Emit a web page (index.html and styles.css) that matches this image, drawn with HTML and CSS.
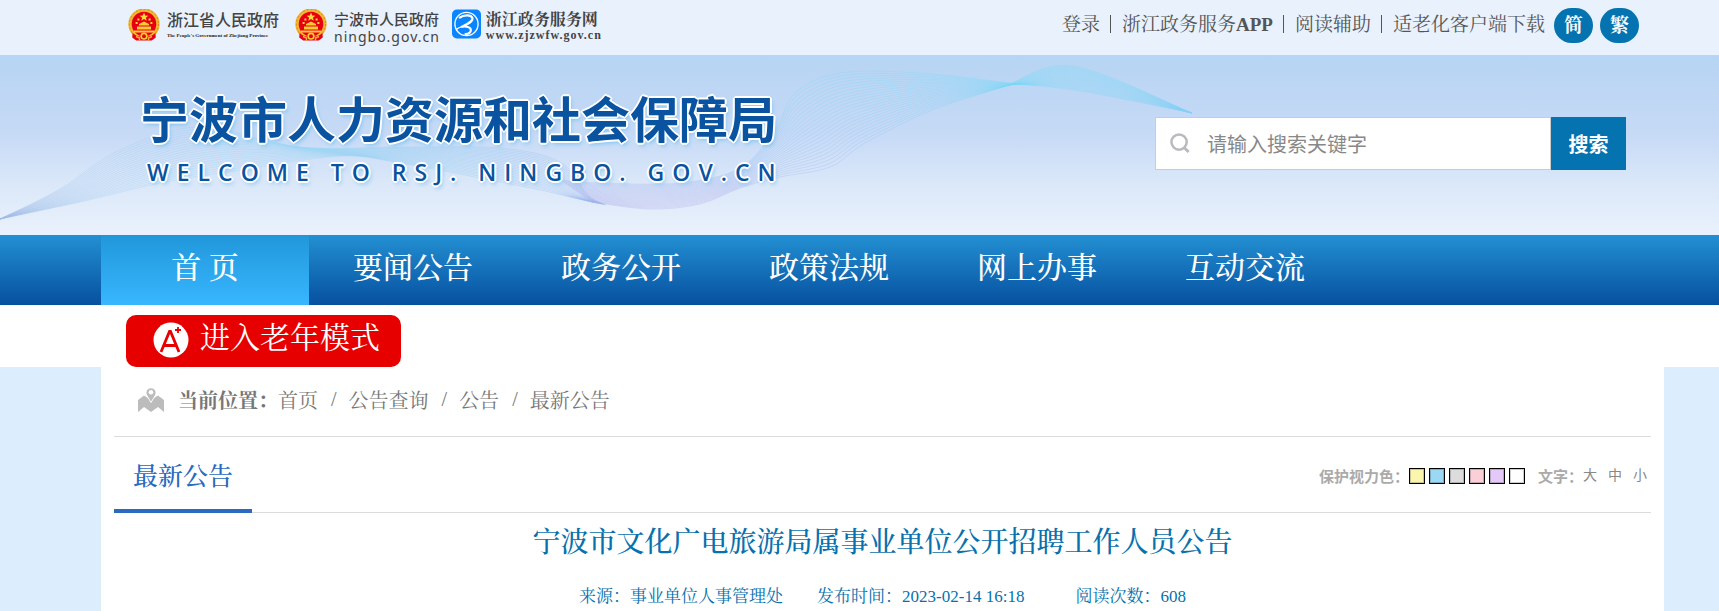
FILE: index.html
```html
<!DOCTYPE html>
<html lang="zh-CN">
<head>
<meta charset="utf-8">
<title>宁波市人力资源和社会保障局</title>
<link rel="stylesheet" href="styles.css">
</head>
<body>
<svg class="defs" width="0" height="0" aria-hidden="true">
  <symbol id="emblem" viewBox="0 0 32 32">
    <circle cx="16" cy="15" r="14" fill="#e60012" stroke="#f2b632" stroke-width="3.4"/>
    <circle cx="16" cy="15" r="14.6" fill="none" stroke="#d98a1c" stroke-width="1" stroke-dasharray="2 2"/>
    <path d="M16 3.6l1.2 2.9 3.1.2-2.4 2 .8 3-2.7-1.7-2.7 1.7.8-3-2.4-2 3.1-.2z" fill="#ffd83a"/>
    <path d="M9.4 9.4h2v2h-2zM20.6 9.4h2v2h-2zM7.6 13h2v2h-2zM22.4 13h2v2h-2z" fill="#ffd83a"/>
    <path d="M11 15l5-2.4 5 2.4v1.6H11zM9 17.6h14v3H9zM6 21.6h20v1.8H6z" fill="#ffc938"/>
    <path d="M4.6 24c4 3.6 6.400 3.400 8.400 3.400h6c2 0 4.400.2 8.400-3.400l.4 4.600-4 3H8.200l-4-3z" fill="#e60012"/>
    <path d="M8 27.500l3.500 1.500v2.500M24 27.500L20.500 29v2.500" fill="none" stroke="#f2b632" stroke-width="1.4"/>
    <circle cx="16" cy="27.200" r="2.800" fill="#e60012" stroke="#ffc938" stroke-width="1.600"/>
  </symbol>
</svg>

<header>
  <div class="topbar">
    <nav class="sites" aria-label="政府网站">
      <a class="site" href="#">
        <svg class="emblem"><use href="#emblem"/></svg>
        <span class="site-text"><span class="site-name wide">浙江省人民政府</span><span class="site-tiny">The People's Government of Zhejiang Province</span></span>
      </a>
      <a class="site" href="#">
        <svg class="emblem"><use href="#emblem"/></svg>
        <span class="site-text"><span class="site-name">宁波市人民政府</span><span class="site-url">ningbo.gov.cn</span></span>
      </a>
      <a class="site" href="#">
        <svg class="service" viewBox="0 0 30 30">
          <rect width="30" height="30" rx="5" fill="#0a84ff"/>
          <circle cx="15" cy="15" r="12" fill="none" stroke="#fff" stroke-width="1.400"/>
          <path d="M8 8.500C12 5.500 19.500 5 21 8.500c1.500 4-5 6.500-11.500 9.500 5-1 10 0 10 3.200 0 2.400-2.500 4-5.500 4.300" fill="none" stroke="#fff" stroke-width="2.200" stroke-linecap="round"/>
          <path d="M4.500 20.500c2-1.500 3.500-2 5-2.500" fill="none" stroke="#fff" stroke-width="1.500"/>
        </svg>
        <span class="site-text"><span class="site-name wide serif">浙江政务服务网</span><span class="site-www">www.zjzwfw.gov.cn</span></span>
      </a>
    </nav>
    <nav class="tools" aria-label="工具">
      <a href="#">登录</a><a href="#">浙江政务服务<b>APP</b></a><a href="#">阅读辅助</a><a href="#">适老化客户端下载</a>
      <button class="lang" type="button">简</button>
      <button class="lang" type="button">繁</button>
    </nav>
  </div>

  <div class="banner">
    <svg class="waves" id="waves" viewBox="0 0 1719 180" preserveAspectRatio="xMidYMid slice" aria-hidden="true">
      <defs>
        <linearGradient id="g1" gradientUnits="userSpaceOnUse" x1="0" y1="0" x2="700" y2="0">
          <stop offset="0" stop-color="#9fb8e6"/><stop offset=".35" stop-color="#8fd6f3"/><stop offset=".65" stop-color="#86c8f0"/><stop offset="1" stop-color="#a8a6e8"/>
        </linearGradient>
        <linearGradient id="g2" gradientUnits="userSpaceOnUse" x1="0" y1="20" x2="0" y2="150">
          <stop offset="0" stop-color="#76dbf8"/><stop offset=".5" stop-color="#8bc2f2"/><stop offset="1" stop-color="#aaa4e6"/>
        </linearGradient>
      </defs>
    </svg>
    <div class="brand">
      <h1>宁波市人力资源和社会保障局</h1>
      <p>WELCOME TO RSJ. NINGBO. GOV.CN</p>
    </div>
    <form class="search">
      <label class="field">
        <svg viewBox="0 0 22 22" aria-label="搜索"><circle cx="9.500" cy="9.500" r="8" fill="none" stroke="#b9b9be" stroke-width="2.600"/><path d="M15 15.500l4.500 4.500" stroke="#b9b9be" stroke-width="3"/></svg>
        <input type="text" placeholder="请输入搜索关键字">
      </label>
      <button type="button">搜索</button>
    </form>
  </div>

  <nav class="mainnav" aria-label="主导航">
    <a class="active" href="#">首 页</a><a href="#">要闻公告</a><a href="#">政务公开</a><a href="#">政策法规</a><a href="#">网上办事</a><a href="#">互动交流</a>
  </nav>
  <div class="elder-row">
    <button class="elder" type="button">
      <svg viewBox="0 0 36 36"><circle cx="18" cy="18" r="17.500" fill="#fff"/><path d="M8 30L16.500 9.500h1L26 30M11 23.500h12" fill="none" stroke="#e60000" stroke-width="2.800"/><path d="M25 5v6M22 8h6" stroke="#e60000" stroke-width="1.800"/></svg>
      <span>进入老年模式</span>
    </button>
  </div>
</header>

<main>
  <nav class="crumbs" aria-label="当前位置">
    <svg viewBox="0 0 26 26"><path d="M0 13l6-4.500 7 4.500 7-4.500 6 4.500v12l-6-5-7 5-7-5-6 5z" fill="#bcbcbc"/><path d="M13 15.500L8.500 8a5 5 0 1 1 9 0z" fill="#bcbcbc" stroke="#fff" stroke-width="1"/><circle cx="13" cy="5.200" r="2.300" fill="#fff"/></svg>
    <b>当前位置：</b>
    <a href="#">首页</a><i>/</i><a href="#">公告查询</a><i>/</i><a href="#">公告</a><i>/</i><a href="#">最新公告</a>
  </nav>
  <div class="tabs">
    <h2>最新公告</h2>
    <div class="reading">
      <span class="label">保护视力色：</span>
      <span class="swatches">
        <button class="c1" type="button" aria-label="黄"></button><button class="c2" type="button" aria-label="蓝"></button><button class="c3" type="button" aria-label="灰"></button><button class="c4" type="button" aria-label="粉"></button><button class="c5" type="button" aria-label="紫"></button><button class="c6" type="button" aria-label="白"></button>
      </span>
      <span class="label">文字：</span>
      <span class="sizes"><a href="#">大</a><a href="#">中</a><a href="#">小</a></span>
    </div>
  </div>
  <article>
    <h3>宁波市文化广电旅游局属事业单位公开招聘工作人员公告</h3>
    <p class="meta"><span>来源：事业单位人事管理处</span><span class="date">发布时间：2023-02-14 16:18</span><span>阅读次数：608</span></p>
  </article>
</main>
<script src="waves.js"></script>
</body>
</html>
```

FILE: styles.css
```css
* { box-sizing: border-box; }
body {
  margin: 0;
  background: #dceefd;
  font-family: "Liberation Serif", "Noto Serif CJK SC", "Noto Sans CJK SC", serif;
  color: #555;
}
h1, h2, h3, p { margin: 0; }
a { color: inherit; text-decoration: none; }
button { font: inherit; border: 0; padding: 0; cursor: pointer; }
.defs { position: absolute; }

.topbar {
  display: flex;
  justify-content: space-between;
  height: 55px;
  padding: 0 80px 0 128px;
  background: #e8f1fc;
}
.sites { display: flex; gap: 16px; padding-top: 9px; }
.site { display: flex; gap: 7px; color: #444; }
.site:last-child { margin-left: -4px; gap: 5px; }
.emblem { width: 32px; height: 32px; }
.service { width: 29px; height: 30px; }
.site-text { display: flex; flex-direction: column; font-family: "Noto Sans CJK SC", sans-serif; }
.site-name { font-size: 15px; font-weight: 500; line-height: 20px; }
.wide { font-size: 16px; }
.serif { font-family: "Noto Serif CJK SC", "Noto Sans CJK SC", serif; font-weight: 700; }
.site-tiny { font: bold 5px/13px "Liberation Serif", serif; color: #222; }
.site-url { font: 14px/16px "Noto Sans", sans-serif; letter-spacing: 1px; }
.site-www { font: bold 12px/12px "Liberation Serif", serif; letter-spacing: 1px; }

.tools { display: flex; padding-top: 8px; font-size: 19px; line-height: 34px; }
.tools a + a::before {
  content: "";
  display: inline-block;
  width: 1px;
  height: 18px;
  margin: 0 11px 0 10px;
  background: #555;
  vertical-align: -2px;
}
.lang {
  width: 39px;
  height: 35px;
  margin-left: 7px;
  border-radius: 18px;
  background: #0573b0;
  color: #fff;
  font-weight: 700;
  line-height: 33px;
}
.tools a + .lang { margin-left: 9px; }

.banner {
  position: relative;
  display: flex;
  justify-content: space-between;
  height: 180px;
  padding: 0 93px 0 140px;
  background: linear-gradient(#b6d4f3, #c7daf6 45%, #dbe8f9 72%, #eaf1fc);
}
.waves { position: absolute; inset: 0; width: 100%; height: 100%; }
.brand {
  position: relative;
  padding-top: 32px;
  color: #0a53a0;
  text-shadow: 2px 0 #fff, -2px 0 #fff, 0 2px #fff, 0 -2px #fff, 1px 1px #fff, -1px -1px #fff, 1px -1px #fff, -1px 1px #fff, 2px 3px 4px #7ec4f0;
}
.brand h1 { font: 700 49px/60px "Noto Sans CJK SC", sans-serif; }
.brand p { padding-left: 7px; font: 600 23px/50px "Open Sans", sans-serif; letter-spacing: 8px; white-space: nowrap; }
.search { position: relative; display: flex; width: 471px; height: 53px; margin-top: 62px; font-family: "Noto Sans CJK SC", sans-serif; font-size: 20px; }
.field { display: flex; flex: 1; align-items: center; gap: 16px; padding-left: 14px; border: 1px solid #ccc; background: #fff; }
.field svg { flex: none; width: 21px; height: 21px; }
.field input { flex: 1; min-width: 0; border: 0; outline: 0; padding: 0; background: none; font: inherit; color: #555; }
.field input::placeholder { color: #888; opacity: 1; }
.search button { width: 75px; background: #0573b0; color: #fff; font-weight: 700; }

.mainnav {
  display: flex;
  height: 70px;
  padding: 0 304px 0 101px;
  background: linear-gradient(#2390d2, #0650a0);
  color: #fff;
  font-size: 30px;
  font-weight: 500;
  line-height: 65px;
  text-align: center;
}
.mainnav a { flex: 0 1 208px; }
.mainnav .active { background: linear-gradient(#2197da, #38b6ff); }

.elder-row { padding: 10px 126px 0; background: #fff; }
.elder {
  display: flex;
  align-items: center;
  gap: 11px;
  width: 275px;
  height: 52px;
  padding-left: 27px;
  border-radius: 10px;
  background: #e60000;
  color: #fff;
  font-size: 30px;
}
.elder svg { width: 36px; height: 36px; margin-bottom: 2px; }
.elder span { line-height: 46px; padding-bottom: 6px; }

main { margin: 0 55px 0 101px; padding: 0 13px; background: #fff; }
.crumbs { display: flex; align-items: center; height: 70px; padding: 0 0 4px 24px; border-bottom: 1px solid #dcdcdc; color: #777; font-size: 20px; }
.crumbs svg { width: 26px; height: 26px; margin-right: 14px; }
.crumbs i { font-style: normal; margin: 0 12px 0 13px; }
.tabs { display: flex; justify-content: space-between; height: 76px; border-bottom: 1px solid #dcdcdc; }
.tabs h2 { height: 76px; padding: 0 19px; border-bottom: 4px solid #2a6abf; color: #2a6abf; font-size: 25px; font-weight: 500; line-height: 79px; }
.reading { display: flex; align-items: center; padding: 3px 4px 0 0; color: #aaa; }
.label { font: 700 15px/22px "Noto Sans CJK SC", sans-serif; }
.swatches { display: flex; gap: 4px; margin-right: 13px; }
.swatches button { width: 16px; height: 16px; border: 1px solid #000; box-shadow: inset 0 0 0 1px rgba(0, 0, 0, .2); }
.c1 { background: #faf6ae; }
.c2 { background: #9bd8f4; }
.c3 { background: #dcdcdc; }
.c4 { background: #facfd8; }
.c5 { background: #e4c8f8; }
.c6 { background: #fff; }
.sizes { display: flex; gap: 11px; padding-bottom: 5px; font: 14px/20px "Noto Sans CJK SC", sans-serif; color: #888; }

article { padding-top: 8px; color: #0871ad; text-align: center; }
article h3 { font-size: 28px; font-weight: 500; line-height: 44px; }
.meta { display: flex; justify-content: center; padding-top: 18px; font-size: 17px; line-height: 28px; }
.date { margin: 0 51px 0 34px; }
```

FILE: waves.js
```js
const svg = document.getElementById("waves");

// Smooth curve through a list of points.
function smooth(p) {
  let d = `M${p[0]}`;
  for (let i = 0; i < p.length - 1; i++) {
    const a = p[i - 1] || p[i], b = p[i], c = p[i + 1], e = p[i + 2] || c;
    const c1 = [b[0] + (c[0] - a[0]) / 6, b[1] + (c[1] - a[1]) / 6];
    const c2 = [c[0] - (e[0] - b[0]) / 6, c[1] - (e[1] - b[1]) / 6];
    d += `C${c1} ${c2} ${c}`;
  }
  return d;
}

// Fan of lines between two edge curves.
function ribbon(from, to, count, colour) {
  for (let n = 0; n <= count; n++) {
    const t = n / count;
    const pts = from.map((p, i) => [p[0] + (to[i][0] - p[0]) * t, p[1] + (to[i][1] - p[1]) * t]);
    const path = document.createElementNS("http://www.w3.org/2000/svg", "path");
    path.setAttribute("d", smooth(pts));
    path.setAttribute("fill", "none");
    path.setAttribute("stroke", colour);
    path.setAttribute("stroke-opacity", "0.3");
    svg.appendChild(path);
  }
}

ribbon(
  [[0, 164], [60, 134], [120, 95], [200, 72], [300, 92], [400, 92], [500, 93], [560, 107], [588, 140], [606, 150]],
  [[0, 164], [80, 147], [160, 128], [240, 115], [340, 101], [400, 108], [470, 121], [540, 135], [570, 142], [592, 147]],
  22, "url(#g1)"
);
ribbon(
  [[560, 125], [600, 128], [680, 128], [740, 113], [775, 75], [795, 38], [840, 18], [920, 18], [1010, 28], [1080, 36], [1192, 58]],
  [[592, 147], [650, 154], [700, 149], [740, 133], [780, 122], [830, 112], [865, 88], [930, 56], [1000, 33], [1072, 11], [1192, 58]],
  24, "url(#g2)"
);
```
